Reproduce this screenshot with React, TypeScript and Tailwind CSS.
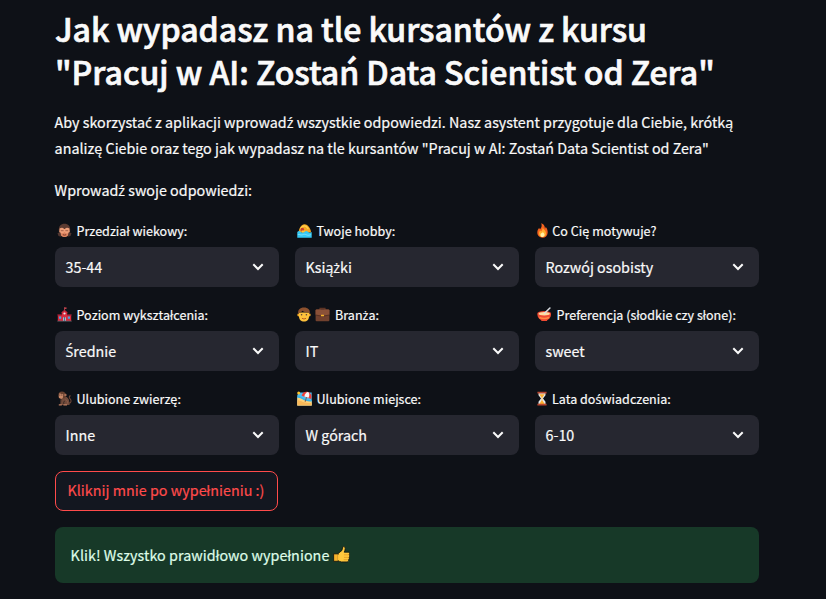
import { Fragment, type ReactNode } from "react";

function Txt({ children }: { children: string }) {
  return (
    <>
      {children.split(/([źżśćŚ])/).map((part, i) =>
        i % 2 ? (
          <span key={i} className="font-['Open_Sans',sans-serif] leading-[0]">{part}</span>
        ) : (
          <Fragment key={i}>{part}</Fragment>
        ),
      )}
    </>
  );
}

function Svg({ children }: { children: ReactNode }) {
  return <svg viewBox="0 0 15 15" className="h-[15px] w-[15px] shrink-0">{children}</svg>;
}

const Monkey = () => (
  <Svg>
    <path d="M1.9 8.500C1.300 3 4 .8 7.500.8S13.700 3 13.100 8.500l-.8 3H2.700z" fill="#5c3b31" />
    <path d="M3.600 9h7.800c1 3-1 5-3.900 5s-4.900-2-3.900-5z" fill="#dc8560" />
    <path d="M2.600 5.600c1.700-1.200 3.600-.8 4.500.3h.8c.9-1.100 2.800-1.500 4.500-.3l.3 3.600c-1.300 1.200-3.800 1.400-5.200-.3-1.400 1.700-3.900 1.500-5.200.3z" fill="#f0a07a" />
    <path d="M3.800 7.700h2.800M8.400 7.700h2.800" stroke="#8f513c" strokeWidth=".8" />
    <path d="M.5 10.200l2.600-1.300 1.200 4.800-2.800-.6zM14.500 10.200l-2.600-1.300-1.200 4.800 2.800-.6z" fill="#513630" />
    <path d="M5.800 11.700q1.700.8 3.400 0" stroke="#7d3527" strokeWidth="1" fill="none" />
  </Svg>
);
const Swimmer = () => (
  <Svg>
    <path d="M1.600 9.500C2 5 4.500 1.500 7.300 1.200c2.200 0 3.600 1.200 4.700 2.800 1.100 1.500 2 3 2 5.500H8z" fill="#f7a823" />
    <path d="M3.200 6.500C4.500 4 6 2.800 7.600 2.900c1.700.1 2.700 1.500 3.700 2.900" stroke="#ffd04d" strokeWidth="1.300" fill="none" />
    <circle cx="5.300" cy="6.700" r="1.900" fill="#c93f2c" />
    <path d="M4.700 7.500h3v2.300h-3z" fill="#ffc83d" />
    <path d="M.3 9c1.200-1.200 2.400-1.200 3.500 0 1.200 1.100 2.500 1.100 3.700 0 1.200-1.200 2.400-1.200 3.600 0 1.200 1.100 2.400 1.100 3.600 0v5.700H.3z" fill="#36c8f4" />
    <path d="M.8 11.600c1.800-.8 2.600 1 4.500.2s3-.6 4.400.1 3 .3 4.400-.4" stroke="#8be6fc" strokeWidth=".8" fill="none" />
  </Svg>
);
const School = () => (
  <Svg>
    <path d="M.8 8h4V5.200l2.700-2 2.700 2V8h4v6H.8z" fill="#d92b3e" />
    <path d="M.4 7.300h4.500v1.200H.4zM10.100 7.300h4.500v1.200h-4.500z" fill="#8e1e34" />
    <path d="M7.100.3h.8v3.500h-.8z" fill="#c8505a" />
    <path d="M7.800.5h1.700v1.300H7.800z" fill="#f04c56" />
    <path d="M4.400 5.700l3.100-2.600 3.100 2.600" stroke="#a01e34" strokeWidth=".9" fill="none" />
    <circle cx="7.500" cy="6.500" r="1.100" fill="#e9edf5" />
    <path d="M2 9.600h2.200v2.200H2zM10.800 9.600H13v2.200h-2.200z" fill="#4aa7df" />
    <path d="M6.100 10.300h2.800V14H6.100z" fill="#9fc4e0" />
    <path d="M7.500 10v4" stroke="#4e5968" strokeWidth=".8" />
    <path d="M.3 13.700h14.400v.8H.3z" fill="#65626b" />
  </Svg>
);
const Man = () => (
  <Svg>
    <circle cx="1.700" cy="8" r="1.400" fill="#f5ab24" />
    <circle cx="12.300" cy="8" r="1.400" fill="#f5ab24" />
    <path d="M2 5.500h10v4c0 3-2 5-5 5s-5-2-5-5z" fill="#ffc23c" />
    <path d="M1.300 7C.5 3 3 .6 7 .6S13.500 3 12.700 7L11.400 5.300C9 5.600 7 5.100 5.400 3.700 4.700 4.800 3.600 5.400 2.600 5.600z" fill="#8d512e" />
    <circle cx="4.600" cy="7.800" r=".8" fill="#574037" />
    <circle cx="9.400" cy="7.800" r=".8" fill="#574037" />
    <path d="M4.900 11.300q2.100 1.400 4.200 0" stroke="#b4551e" strokeWidth=".9" fill="none" />
  </Svg>
);
const Briefcase = () => (
  <Svg>
    <path d="M5 3V1.400h5V3" stroke="#5d3424" strokeWidth="1.200" fill="none" />
    <rect x=".6" y="2.600" width="13.800" height="11.600" rx="1" fill="#71412e" />
    <path d="M.6 3.600q0-1 1-1h11.800q1 0 1 1v4.200L9 8.800H6L.6 7.800z" fill="#8a5138" />
    <path d="M.7 8l5.300 1h3l5.300-1" stroke="#4c2a1e" strokeWidth=".7" fill="none" />
    <rect x="6" y="7.800" width="3" height="1.500" rx=".3" fill="#f5b52e" />
  </Svg>
);
const Bowl = () => (
  <Svg>
    <ellipse cx="7.200" cy="6.600" rx="6.900" ry="2.600" fill="#e5412e" />
    <path d="M.3 6.700h13.800c0 3.700-2 5.600-4 6.500v.9H4.300v-.9c-2-.9-4-2.800-4-6.500z" fill="#f04a32" />
    <path d="M2.300 10.500q5 1.900 9.800 0" stroke="#ff8a45" strokeWidth="1.500" fill="none" />
    <ellipse cx="7.200" cy="6.800" rx="5.700" ry="1.700" fill="#ffd9a0" />
    <path d="M7.600 6.300L12.900 1" stroke="#d9dce1" strokeWidth="1.600" strokeLinecap="round" />
  </Svg>
);
const Ape = () => (
  <Svg>
    <path d="M11 12c3.700.7 3.500-2.900 2.100-4.200s-.9-3.100.5-2.900" stroke="#6d4637" strokeWidth="1.100" fill="none" />
    <path d="M4 6c4-2 8 .4 8.200 4.500L12.600 14H3.300z" fill="#724b3b" />
    <circle cx="5" cy="4.200" r="3.600" fill="#67402f" />
    <circle cx="8.400" cy="4" r="1.200" fill="#a86e55" />
    <path d="M2 2.800c1-.9 2 0 2.300.5.8-.8 2.100-.4 2 .8l-.5 2.800c-1 1.300-3.400 1-4-.3z" fill="#c98868" />
    <circle cx="2.800" cy="4.100" r=".5" fill="#302322" />
    <circle cx="4.900" cy="4.100" r=".5" fill="#302322" />
    <path d="M4 8l-.6 5.400M7.700 9.800q-2 2-.4 3.600" stroke="#422e29" strokeWidth="1.100" fill="none" />
    <path d="M1.800 13.200h3v1.200h-3zM6.400 13.200H10v1.200H6.400z" fill="#bd7e61" />
    <path d="M8.500 8.500q2.800 1.200 2 4" stroke="#8a5a48" strokeWidth=".9" fill="none" />
  </Svg>
);
const Beach = () => (
  <Svg>
    <path d="M2.500 1.500h12.200v13H.3V4z" fill="#4fbdf0" />
    <path d="M.3 6.200c3 0 4.800 1.400 7 2.600s4.600.7 7.400 1.200v4.500H.3z" fill="#ffd27a" />
    <path d="M.3 9.300c4 0 6 3.200 14.400 2.700v2.500H.3z" fill="#f9b95a" />
    <path d="M.3 5.900c3-.2 5 1.600 7.500 3 2 .9 4.500.7 6.900 1" stroke="#35b3ee" strokeWidth="1.400" fill="none" />
    <path d="M4.700 4.800C5.300 1 10-.6 13 2.200c1.600 1.500 1.900 3.800 1 5.700z" fill="#ee3e39" />
    <path d="M7.300 5.500C8 2.700 9.600 1 11 1.100c1.600.7 1.600 3.400.6 5.700z" fill="#f4f6fa" />
    <path d="M9.500 6.200l-1.300 4.600" stroke="#85503c" strokeWidth=".9" />
    <circle cx="1.700" cy="2" r="1.500" fill="#ffc52e" />
  </Svg>
);
const Fire = () => (
  <svg viewBox="0 0 11 15" className="h-[15px] w-[11px] shrink-0">
    <path d="M4.200.3C7.500 1.400 8 4 7.900 5.500c.6-.4.700-1.200.6-1.800 1.700 1.600 2.300 3.900 2.200 6C10.500 12.800 8.300 14.700 5.500 14.700S.4 12.800.3 9.600c0-2.500 1-3.500 1.900-4.800.1.800.4 1.300.9 1.500C4.900 4.500 5 2.300 4.200.3z" fill="#f5631f" />
    <path d="M5.700 4.600c.4 2 3.300 3 3.300 5.900 0 2-1.500 3.600-3.500 3.600S2 12.600 2 10.500c0-1.300.6-2.200 1.300-3 .3.700.8.9 1.200.8C5.400 7 5.800 5.800 5.700 4.600z" fill="#ffb02e" />
    <path d="M5.700 8.500c.2 1.100 1.800 1.700 1.800 3.300 0 1.300-.9 2.200-2 2.200s-2-.8-2-2.100c0-.9.500-1.300.9-1.800.3.300.5.300.7.200.4-.6.600-1.200.6-1.800z" fill="#fff1a8" />
  </svg>
);
const Hourglass = () => (
  <svg viewBox="0 0 10 15" className="h-[15px] w-[10px] shrink-0">
    <path d="M1.500 1.500h7v2.800L6 7.500l2.500 3.200v2.800h-7v-2.800L4 7.500 1.500 4.300z" fill="#e5e9ed" />
    <path d="M2.300 3.200h5.400L5.300 6.700v2.600l2.400 3.600H2.300l2.400-3.600V6.700z" fill="#ffb02e" />
    <path d="M.4.700h9.200v1.700H.4zM.4 12.700h9.200v1.700H.4z" fill="#b9462f" />
  </svg>
);
const Thumb = () => (
  <svg viewBox="0 0 16 16" className="h-[17px] w-[17px] shrink-0">
    <path d="M4.500 7.300L8.400 4.200 9.200.9c.8-.8 2.200-.2 2.300 1.200.1 1.300-.4 2.500-1 3.700h4c1.300.1 1.600 1.700.7 2.400.8.700.6 1.900-.1 2.400.6.700.3 1.900-.4 2.200.3 1-.3 2-1.500 2.200H8c-1.500 0-2.600-.9-3.500-1.400z" fill="#ffc83d" stroke="#101510" strokeWidth=".8" />
    <path d="M.6 7.400h4.300v7H.6z" fill="#f7b32c" stroke="#101510" strokeWidth=".8" />
    <path d="M4.300 8h1.600v5.500H4.300z" fill="#fdc035" />
    <path d="M10.300 8.300h4.500M10.300 10.700h4.300M10 12.900h4" stroke="#df941f" strokeWidth=".7" />
  </svg>
);

const Chevron = () => (
  <svg viewBox="0 0 12 8" className="h-2 w-3 shrink-0" fill="none" stroke="#fafafa" strokeWidth="2">
    <path d="M1.300 1.300L6 6l4.700-4.700" />
  </svg>
);

type Field = { icons: ReactNode; label: string; value: string; slot: string };
const fields: Field[] = [
  { icons: <Monkey />, label: "Przedział wiekowy:", value: "35-44", slot: "w-[21.5px]" },
  { icons: <Swimmer />, label: "Twoje hobby:", value: "Książki", slot: "w-[21.5px]" },
  { icons: <Fire />, label: "Co Cię motywuje?", value: "Rozwój osobisty", slot: "w-[17.3px]" },
  { icons: <School />, label: "Poziom wykształcenia:", value: "Średnie", slot: "w-[21.5px]" },
  { icons: <><Man /><Briefcase /></>, label: "Branża:", value: "IT", slot: "w-[40px]" },
  { icons: <Bowl />, label: "Preferencja (słodkie czy słone):", value: "sweet", slot: "w-[21.5px]" },
  { icons: <Ape />, label: "Ulubione zwierzę:", value: "Inne", slot: "w-[21.5px]" },
  { icons: <Beach />, label: "Ulubione miejsce:", value: "W górach", slot: "w-[21.5px]" },
  { icons: <Hourglass />, label: "Lata doświadczenia:", value: "6-10", slot: "w-[17px]" },
];

function Select({ field }: { field: Field }) {
  return (
    <div>
      <div className="flex h-7 items-start whitespace-nowrap text-[12.53px] leading-6 tracking-[0.03px]">
        <span className={`flex h-6 shrink-0 items-center gap-[3px] pl-0.5 ${field.slot}`}>{field.icons}</span>
        <span><Txt>{field.label}</Txt></span>
      </div>
      <div className="flex h-10 items-center justify-between rounded-lg bg-[#262730] pl-[10.5px] pr-[15px]">
        <span className="leading-6"><Txt>{field.value}</Txt></span>
        <Chevron />
      </div>
    </div>
  );
}

export default function App() {
  return (
    <main className="h-[599px] overflow-hidden bg-[#0e1117] pl-[55px] pt-[6.7px] font-['Noto_Sans_CJK_SC','Open_Sans',sans-serif] text-[14.32px] text-[#fafafa] [-webkit-text-stroke:0.2px_currentColor]">
      <div className="w-[704px]">
        <h1 className="whitespace-nowrap text-[32.1px] font-medium leading-[43.2px] tracking-[-0.04px] [-webkit-text-stroke:0.7px_#fafafa]">
          Jak wypadasz na tle kursantów z kursu
          <br />
          "Pracuj w AI: Zostań Data Scientist od Zera"
        </h1>
        <p className="-ml-[0.4px] mt-[16px] whitespace-nowrap leading-[25.6px]">
          <Txt>Aby skorzystać z aplikacji wprowadź wszystkie odpowiedzi. Nasz asystent przygotuje dla Ciebie, krótką</Txt>
          <br />
          <Txt>analizę Ciebie oraz tego jak wypadasz na tle kursantów "Pracuj w AI: Zostań Data Scientist od Zera"</Txt>
        </p>
        <p className="-ml-[0.4px] mt-[16.7px] leading-[25.6px]"><Txt>Wprowadź swoje odpowiedzi:</Txt></p>
        <div className="mt-4 grid grid-cols-3 gap-4">
          {fields.map((f) => <Select key={f.label} field={f} />)}
        </div>
        <button className="mt-4 flex h-10 w-[223px] items-center justify-center whitespace-nowrap rounded-lg border border-[#ff4b4b] bg-[#131720] pb-[1.5px] pr-px tracking-[0.03px] text-[#ff4b4b]">
          Kliknij mnie po wypełnieniu :)
        </button>
        <div className="mt-4 flex h-14 items-center gap-1 rounded-lg bg-[#173928] pl-[15.6px] tracking-[0.05px] text-[#dffde9]">
          <span>Klik! Wszystko prawidłowo wypełnione</span>
          <Thumb />
        </div>
      </div>
    </main>
  );
}
